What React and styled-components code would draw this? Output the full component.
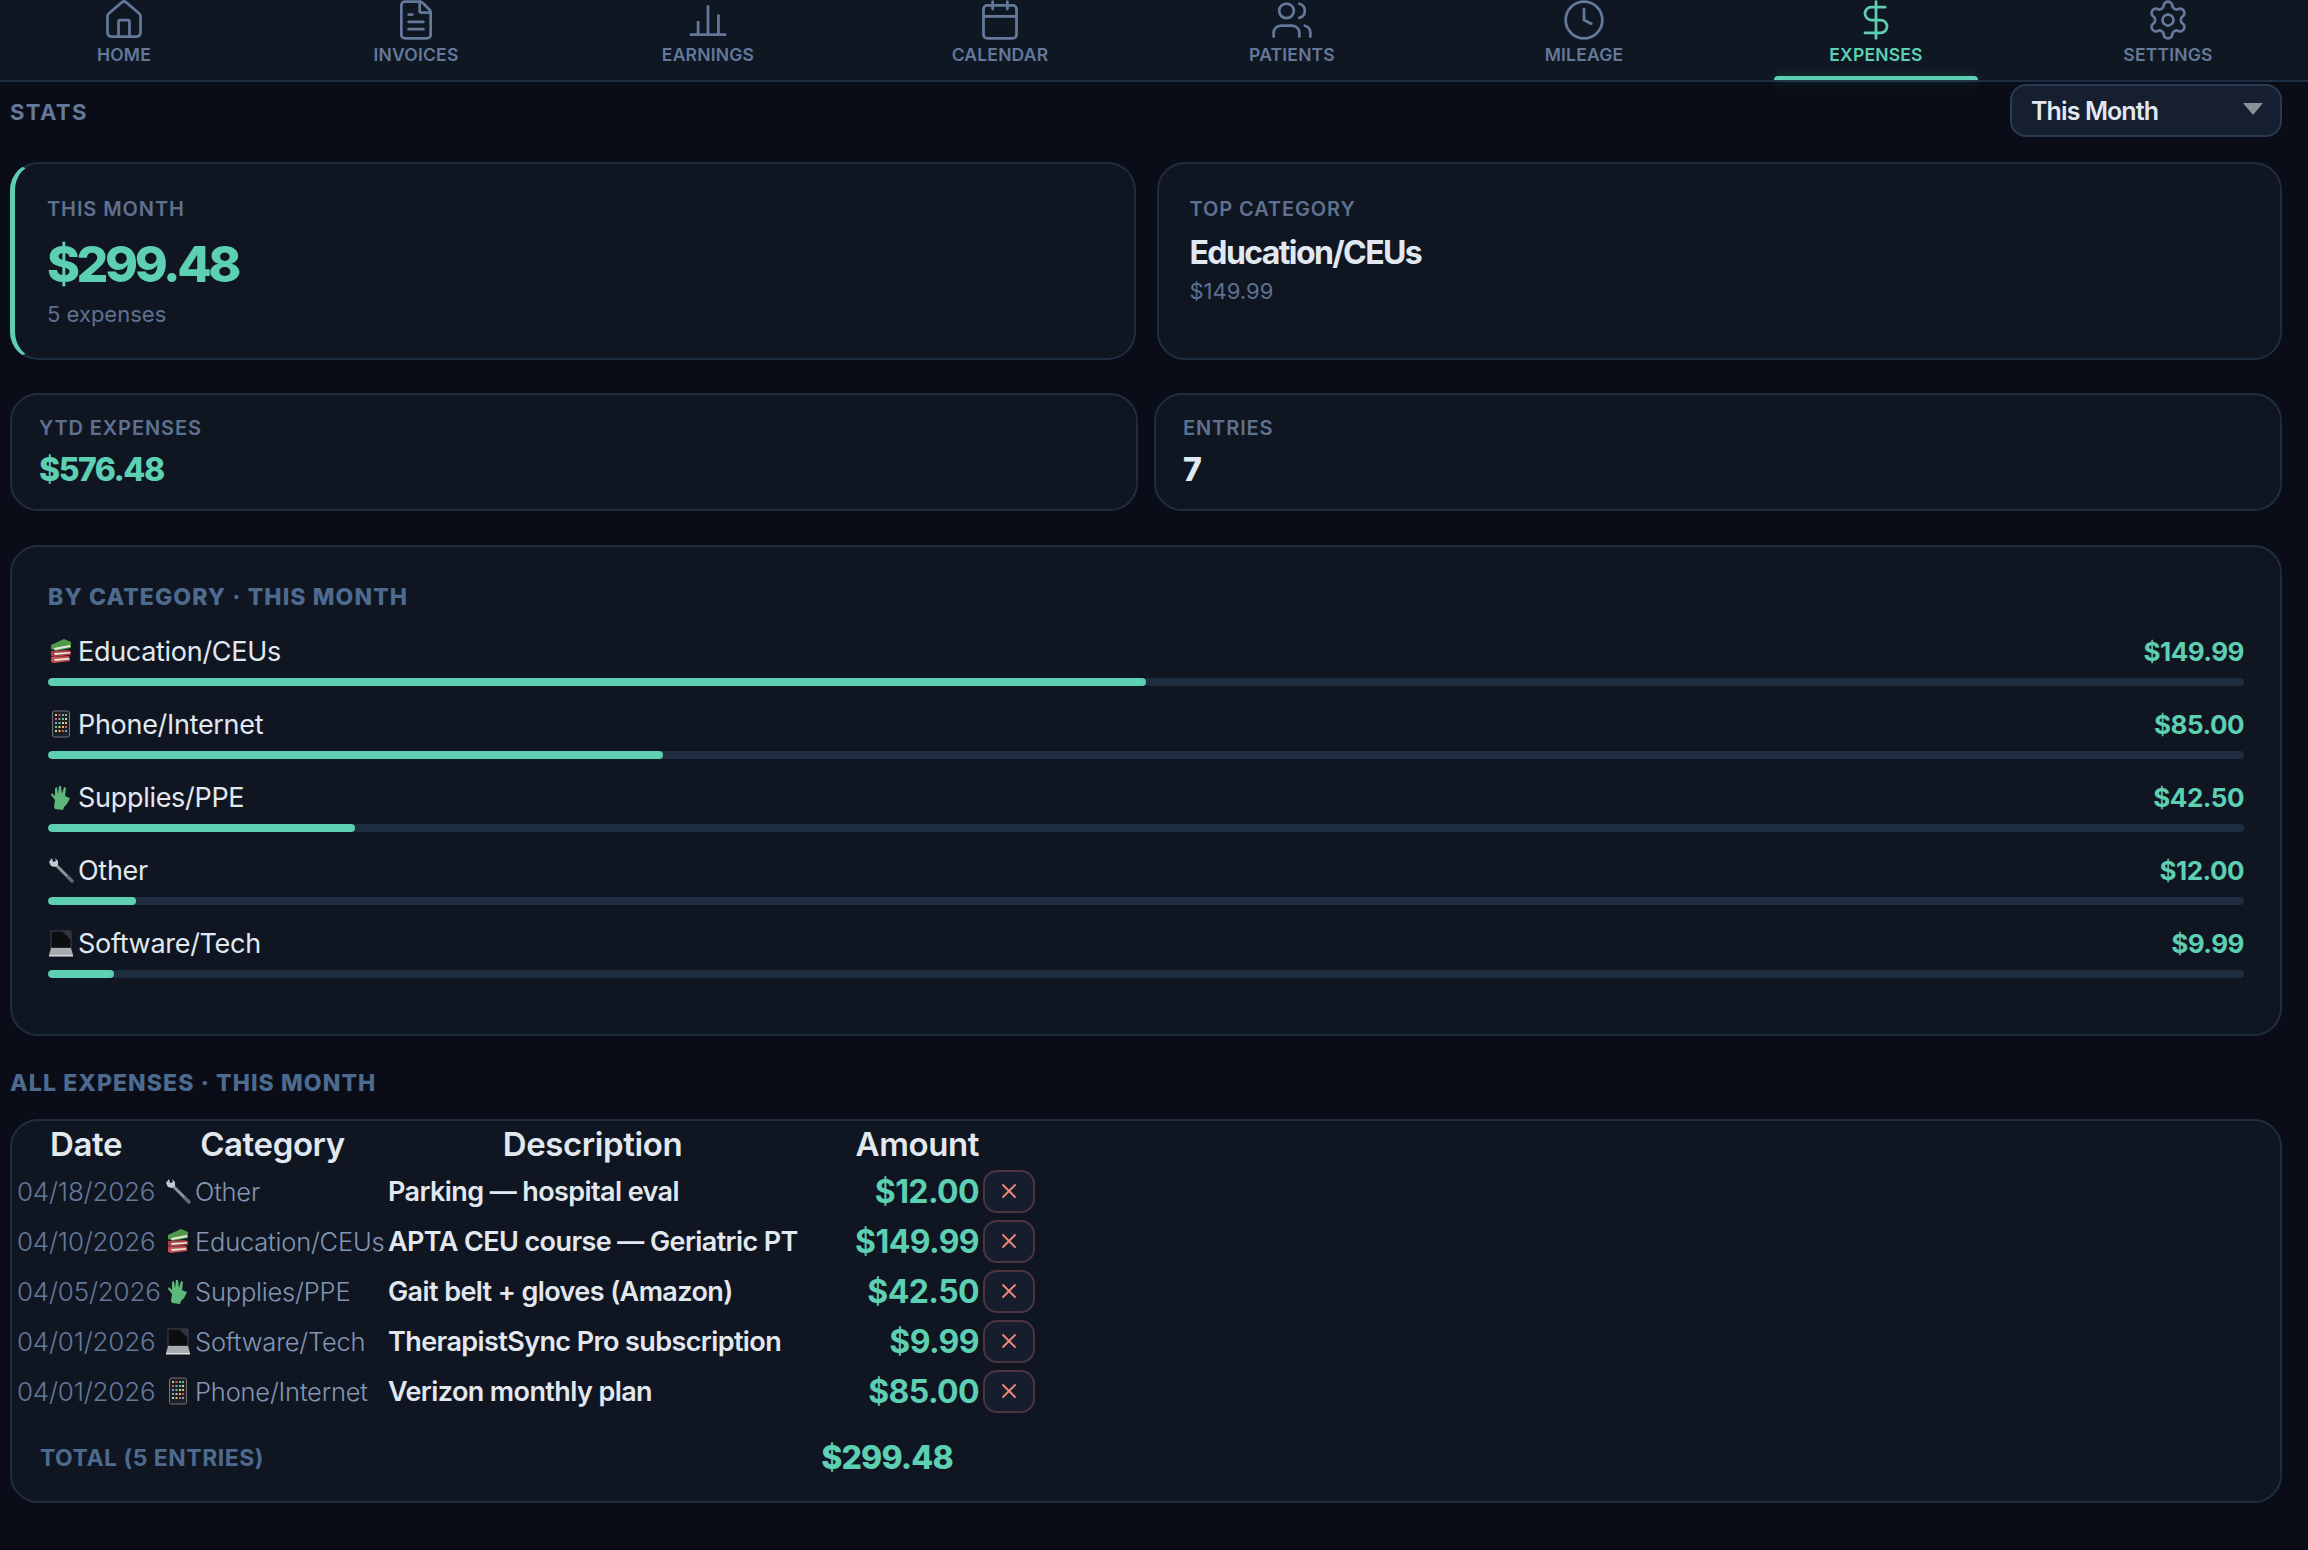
import styled, { createGlobalStyle } from 'styled-components';
import { House, FileText, Calendar, Users, Clock, DollarSign, Settings, X } from 'lucide-react';

const GlobalStyle = createGlobalStyle`
  html, body {
    margin: 0;
    background: #0a0d18;
    color: #e2e8f0;
    font-family: 'Inter', 'Noto Sans', sans-serif;
  }
`;

const Page = styled.div`
  width: 2308px;
  height: 1550px;
  overflow: hidden;
  background: #0a0d18;
`;

const Nav = styled.nav`
  display: flex;
  gap: 88px;
  height: 82px;
  box-sizing: border-box;
  padding: 0 22px;
  background: #0f1722;
  border-bottom: 2px solid #1e2d42;
`;

const NavItem = styled.div`
  position: relative;
  width: 204px;
  display: flex;
  flex-direction: column;
  align-items: center;
  color: ${(p) => (p.$active ? '#5dcfb2' : '#64789a')};

  svg {
    margin-top: -2px;
    flex-shrink: 0;
  }

  ${(p) =>
    p.$active &&
    `&::after {
      content: '';
      position: absolute;
      left: 0;
      right: 0;
      bottom: 0;
      height: 4px;
      border-radius: 4px 4px 0 0;
      background: #5dcfb2;
      box-shadow: 0 0 12px rgba(93, 207, 178, 0.3);
    }`}
`;

const NavLabel = styled.span`
  margin-top: 3px;
  font-size: 17.5px;
  line-height: 20px;
  font-weight: 600;
  letter-spacing: 0.2px;
`;

const Main = styled.main`
  padding: 0 26px 0 10px;
`;

const StatsBar = styled.div`
  display: flex;
  justify-content: space-between;
  align-items: center;
  margin-top: 2px;
  height: 53px;
`;

const StatsTitle = styled.h2`
  margin: 2px 0 0;
  font-size: 22px;
  font-weight: 700;
  letter-spacing: 1.4px;
  color: #64789a;
`;

const PeriodSelect = styled.div`
  width: 272px;
  height: 53px;
  box-sizing: border-box;
  display: flex;
  align-items: center;
  justify-content: space-between;
  padding: 0 17px 0 19px;
  background: #161f30;
  border: 2px solid #2a3a55;
  border-radius: 16px;
  font-size: 25px;
  font-weight: 600;
  letter-spacing: -0.9px;
  color: #e2e8f0;
`;

const Caret = styled.span`
  width: 0;
  height: 0;
  margin-top: -3px;
  border-left: 10px solid transparent;
  border-right: 10px solid transparent;
  border-top: 12px solid #8b8f96;
`;

const HeroRow = styled.div`
  display: grid;
  grid-template-columns: 1fr 1fr;
  gap: 21px;
  margin-top: 25px;
`;

const SmallRow = styled.div`
  display: grid;
  grid-template-columns: 1fr 1fr;
  gap: 16px;
  margin-top: 33px;
`;

const Card = styled.div`
  box-sizing: border-box;
  background: #101621;
  border: 2px solid #1e2d42;
  border-radius: 28px;
`;

const HeroCard = styled(Card)`
  height: 198px;
  padding: 33px 31px 0;
  ${(p) => p.$accent && 'border-left: 5px solid #5dcfb2; padding-left: 32px;'}
`;

const SmallCard = styled(Card)`
  height: 118px;
  padding: 21px 27px 0;
`;

const CardLabel = styled.div`
  font-size: 20px;
  line-height: 24px;
  font-weight: 600;
  letter-spacing: 0.9px;
  color: #5f7190;
`;

const HeroValue = styled.div`
  margin-top: 15px;
  font-size: 50px;
  line-height: 56px;
  font-weight: 800;
  letter-spacing: -3.4px;
  color: #5dcfb2;
`;

const TopValue = styled.div`
  margin-top: 13px;
  font-size: 32px;
  line-height: 38px;
  font-weight: 700;
  letter-spacing: -1.6px;
  color: #e2e8f0;
`;

const CardNote = styled.div`
  margin-top: ${(p) => p.$gap}px;
  font-size: 22px;
  line-height: 28px;
  font-weight: 400;
  color: #5f7190;
`;

const SmallValue = styled.div`
  margin-top: 10px;
  font-size: 32px;
  line-height: 40px;
  font-weight: 800;
  letter-spacing: -1.5px;
  color: ${(p) => (p.$plain ? '#e2e8f0' : '#5dcfb2')};
`;

const CategoryPanel = styled(Card)`
  margin-top: 34px;
  padding: 36px 36px 56px;
`;

const SectionTitle = styled.h3`
  margin: ${(p) => p.$margin || 0};
  font-size: 23px;
  line-height: 28px;
  font-weight: 800;
  letter-spacing: 1.1px;
  color: #4d6a8f;
`;

const CategoryList = styled.div`
  display: flex;
  flex-direction: column;
  gap: 20px;
  margin-top: 22px;
`;

const CategoryHead = styled.div`
  display: flex;
  justify-content: space-between;
  align-items: center;
  height: 36px;
`;

const CategoryName = styled.span`
  display: flex;
  align-items: center;
  gap: 4px;
  font-size: 27px;
  font-weight: 400;
  letter-spacing: -0.3px;
  color: #e2e8f0;
`;

const CategoryAmount = styled.span`
  font-size: 26px;
  font-weight: 700;
  letter-spacing: -0.5px;
  color: #5dcfb2;
`;

const Track = styled.div`
  height: 8px;
  margin-top: 9px;
  border-radius: 4px;
  background: #1e2d3f;
  overflow: hidden;
`;

const Fill = styled.div`
  height: 100%;
  border-radius: 4px;
  background: #5dcfb2;
`;

const TablePanel = styled(Card)`
  height: 384px;
  overflow: hidden;
`;

const Table = styled.table`
  width: 1025px;
  table-layout: fixed;
  border-collapse: collapse;
`;

const Th = styled.th`
  height: 45px;
  padding: 0 ${(p) => (p.$right ? '3px' : '0')} 0 0;
  font-size: 33px;
  font-weight: 600;
  letter-spacing: -0.4px;
  color: #e2e8f0;
  text-align: ${(p) => (p.$right ? 'right' : 'center')};
`;

const DateCell = styled.td`
  height: 50px;
  padding: 0 0 0 5px;
  font-size: 26px;
  font-weight: 300;
  letter-spacing: -0.2px;
  color: #64789a;
  white-space: nowrap;
`;

const CategoryCell = styled.td`
  padding: 0 0 0 5px;
  font-size: 25.5px;
  font-weight: 300;
  letter-spacing: -0.2px;
  color: #8296b4;
  white-space: nowrap;
`;

const CategoryInner = styled.span`
  display: flex;
  align-items: center;
  gap: 4px;

  svg {
    flex-shrink: 0;
  }
`;

const DescCell = styled.td`
  padding: 0 0 0 3px;
  font-size: 27px;
  font-weight: 600;
  letter-spacing: -0.6px;
  color: #e2e8f0;
  white-space: nowrap;
`;

const AmountCell = styled.td`
  padding: 0 3px 0 0;
  text-align: right;
  font-size: 32px;
  font-weight: 700;
  letter-spacing: -0.6px;
  color: #5dcfb2;
`;

const ButtonCell = styled.td`
  padding: 0 0 0 1px;
`;

const DeleteButton = styled.button`
  display: flex;
  align-items: center;
  justify-content: center;
  width: 52px;
  height: 43px;
  padding: 0;
  background: #161d2c;
  border: 2px solid #4a3540;
  border-radius: 14px;
  color: #f08a78;
`;

const TotalLabel = styled.td`
  height: 83px;
  padding: 0 0 0 28px;
  font-size: 23px;
  font-weight: 700;
  letter-spacing: 0.5px;
  color: #4d6a8f;
`;

const TotalValue = styled.td`
  padding: 0 29px 0 0;
  text-align: right;
  font-size: 32px;
  font-weight: 800;
  letter-spacing: -0.8px;
  color: #5dcfb2;
`;

const BarChart = ({ size, strokeWidth }) => (
  <svg
    width={size}
    height={size}
    viewBox="0 0 24 24"
    fill="none"
    stroke="currentColor"
    strokeWidth={strokeWidth}
  >
    <path d="M2 20h20M6.6 20v-7.5M12 20V4M17.7 20v-11" />
  </svg>
);

const Books = () => (
  <svg width="26" height="26" viewBox="0 0 26 26">
    <path d="M3 7 16 1l7 3v6L8 13 3 11z" fill="#4f9a4a" />
    <path d="M6 10l16-3v2L7 12z" fill="#ece8dc" />
    <path d="M3 13l16-1 4 1v4L6 19l-3-1z" fill="#a93f48" />
    <path d="M6 15l16-1v1.5L7 17z" fill="#ece8dc" />
    <path d="M3 19l18-1 1 2v3L6 25l-3-1z" fill="#c2504e" />
    <path d="M6 21l15-1v1.5L7 23z" fill="#ece8dc" />
  </svg>
);

const Phone = () => (
  <svg width="26" height="28" viewBox="0 0 26 28">
    <rect x="4.5" y="1" width="17" height="26" rx="2" fill="#1d2127" stroke="#8a8a8a" strokeWidth="0.8" />
    {[5, 9, 13, 17, 21].map((y, i) =>
      [8, 11.5, 15, 18].map((x, j) => (
        <rect
          key={`${x}-${y}`}
          x={x - 1}
          y={y - 1}
          width="2"
          height="2"
          fill={['#e2c14d', '#d9584e', '#5cb0e0', '#6fc46a', '#c9c9c9'][(i + j) % 5]}
        />
      ))
    )}
  </svg>
);

const Glove = () => (
  <svg width="26" height="26" viewBox="0 0 26 26">
    <path
      d="M7 25l-1-2 1-7-4-5 1-2 3 3 0-8 2-1 1 7 1-8 2 0 1 8 2-7 2 1-1 8 2 1 3 1-3 6-3 3-1 3z"
      fill="#5db87a"
    />
  </svg>
);

const Wrench = () => (
  <svg width="26" height="26" viewBox="0 0 26 26">
    <path d="M8 8l15 15" stroke="#8f959d" strokeWidth="3" strokeLinecap="round" />
    <path d="M1 5l3-4 1 4 3-1-1-3 3 3v4l-3 2-4-1z" fill="#c4c9cf" />
    <path d="M20 20l4 4" stroke="#666a72" strokeWidth="3.4" strokeLinecap="round" />
  </svg>
);

const Laptop = () => (
  <svg width="26" height="27" viewBox="0 0 26 27">
    <path d="M3 1h20v17H3z" fill="#0c0d10" stroke="#777" strokeWidth="0.5" />
    <path d="M14 1h9v9z" fill="#33363c" />
    <path d="M3 18h20l2 7H1z" fill="#a8abaf" />
    <path d="M1 25h24v1.5H1z" fill="#dcdee0" />
  </svg>
);

const navItems = [
  { label: 'HOME', Icon: House },
  { label: 'INVOICES', Icon: FileText },
  { label: 'EARNINGS', Icon: BarChart },
  { label: 'CALENDAR', Icon: Calendar },
  { label: 'PATIENTS', Icon: Users },
  { label: 'MILEAGE', Icon: Clock },
  { label: 'EXPENSES', Icon: DollarSign, active: true },
  { label: 'SETTINGS', Icon: Settings },
];

const categories = [
  { name: 'Education/CEUs', Icon: Books, amount: '$149.99', pct: 50 },
  { name: 'Phone/Internet', Icon: Phone, amount: '$85.00', pct: 28 },
  { name: 'Supplies/PPE', Icon: Glove, amount: '$42.50', pct: 14 },
  { name: 'Other', Icon: Wrench, amount: '$12.00', pct: 4 },
  { name: 'Software/Tech', Icon: Laptop, amount: '$9.99', pct: 3 },
];

const expenses = [
  { date: '04/18/2026', category: 'Other', Icon: Wrench, desc: 'Parking — hospital eval', amount: '$12.00' },
  { date: '04/10/2026', category: 'Education/CEUs', Icon: Books, desc: 'APTA CEU course — Geriatric PT', amount: '$149.99' },
  { date: '04/05/2026', category: 'Supplies/PPE', Icon: Glove, desc: 'Gait belt + gloves (Amazon)', amount: '$42.50' },
  { date: '04/01/2026', category: 'Software/Tech', Icon: Laptop, desc: 'TherapistSync Pro subscription', amount: '$9.99' },
  { date: '04/01/2026', category: 'Phone/Internet', Icon: Phone, desc: 'Verizon monthly plan', amount: '$85.00' },
];

export default function App() {
  return (
    <Page>
      <GlobalStyle />
      <Nav>
        {navItems.map(({ label, Icon, active }) => (
          <NavItem key={label} $active={active}>
            <Icon size={44} strokeWidth={1.5} />
            <NavLabel>{label}</NavLabel>
          </NavItem>
        ))}
      </Nav>
      <Main>
        <StatsBar>
          <StatsTitle>STATS</StatsTitle>
          <PeriodSelect>
            This Month
            <Caret />
          </PeriodSelect>
        </StatsBar>
        <HeroRow>
          <HeroCard $accent>
            <CardLabel>THIS MONTH</CardLabel>
            <HeroValue>$299.48</HeroValue>
            <CardNote $gap={8}>5 expenses</CardNote>
          </HeroCard>
          <HeroCard>
            <CardLabel>TOP CATEGORY</CardLabel>
            <TopValue>Education/CEUs</TopValue>
            <CardNote $gap={5}>$149.99</CardNote>
          </HeroCard>
        </HeroRow>
        <SmallRow>
          <SmallCard>
            <CardLabel>YTD EXPENSES</CardLabel>
            <SmallValue>$576.48</SmallValue>
          </SmallCard>
          <SmallCard>
            <CardLabel>ENTRIES</CardLabel>
            <SmallValue $plain>7</SmallValue>
          </SmallCard>
        </SmallRow>
        <CategoryPanel>
          <SectionTitle>BY CATEGORY · THIS MONTH</SectionTitle>
          <CategoryList>
            {categories.map(({ name, Icon, amount, pct }) => (
              <div key={name}>
                <CategoryHead>
                  <CategoryName>
                    <Icon />
                    {name}
                  </CategoryName>
                  <CategoryAmount>{amount}</CategoryAmount>
                </CategoryHead>
                <Track>
                  <Fill style={{ width: `${pct}%` }} />
                </Track>
              </div>
            ))}
          </CategoryList>
        </CategoryPanel>
        <SectionTitle $margin="33px 0 22px">ALL EXPENSES · THIS MONTH</SectionTitle>
        <TablePanel>
          <Table>
            <colgroup>
              <col width="148" />
              <col width="225" />
              <col width="415" />
              <col width="182" />
              <col width="55" />
            </colgroup>
            <thead>
              <tr>
                <Th>Date</Th>
                <Th>Category</Th>
                <Th>Description</Th>
                <Th $right>Amount</Th>
                <Th />
              </tr>
            </thead>
            <tbody>
              {expenses.map(({ date, category, Icon, desc, amount }) => (
                <tr key={desc}>
                  <DateCell>{date}</DateCell>
                  <CategoryCell>
                    <CategoryInner>
                      <Icon />
                      {category}
                    </CategoryInner>
                  </CategoryCell>
                  <DescCell>{desc}</DescCell>
                  <AmountCell>{amount}</AmountCell>
                  <ButtonCell>
                    <DeleteButton aria-label="Delete expense">
                      <X size={24} strokeWidth={1.8} />
                    </DeleteButton>
                  </ButtonCell>
                </tr>
              ))}
            </tbody>
            <tfoot>
              <tr>
                <TotalLabel colSpan={3}>TOTAL (5 ENTRIES)</TotalLabel>
                <TotalValue>$299.48</TotalValue>
                <td />
              </tr>
            </tfoot>
          </Table>
        </TablePanel>
      </Main>
    </Page>
  );
}
